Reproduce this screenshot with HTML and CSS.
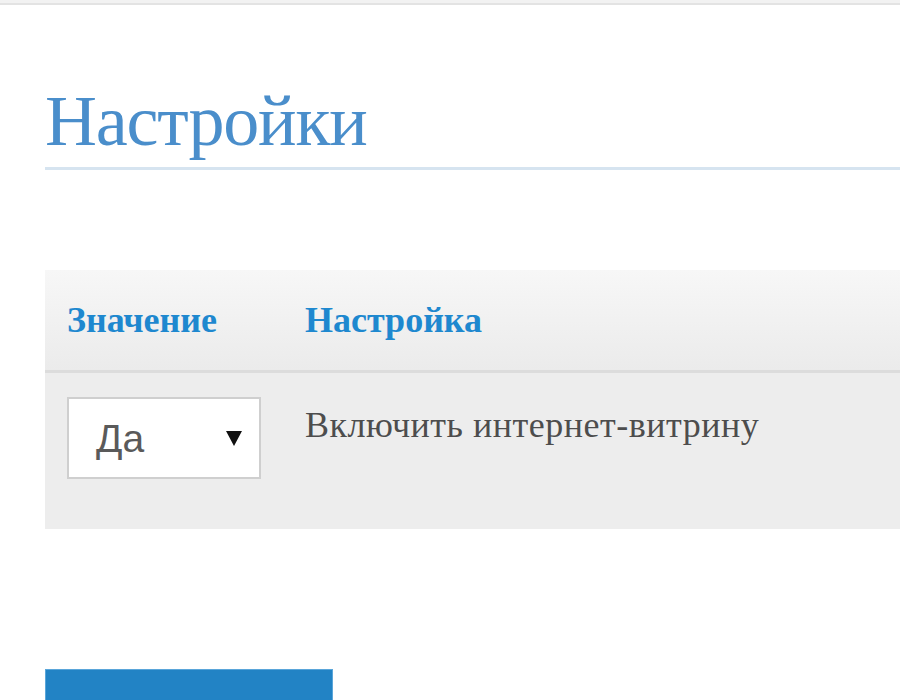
FILE: index.html
```html
<!DOCTYPE html>
<html lang="ru">
<head>
<meta charset="utf-8">
<title>Настройки</title>
<link rel="stylesheet" href="styles.css">
</head>
<body>
<div class="topbar"></div>
<main class="page">
  <h1 class="title">Настройки</h1>
  <div class="settings">
    <div class="row head">
      <div class="cell th">Значение</div>
      <div class="cell th">Настройка</div>
    </div>
    <div class="row body">
      <div class="cell">
        <div class="select">
          <span class="select-value">Да</span>
          <svg class="select-arrow" width="16" height="16" viewBox="0 0 16 16"><polygon points="0,1 16,1 8,16" fill="#111"/></svg>
        </div>
      </div>
      <div class="cell label">Включить интернет-витрину</div>
    </div>
  </div>
  <button class="save" type="button" aria-label="Сохранить"></button>
</main>
</body>
</html>
```
FILE: styles.css
```css
html, body {
  margin: 0;
  padding: 0;
  background: #ffffff;
  font-family: "Liberation Serif", "Times New Roman", serif;
  overflow: hidden;
}
.topbar {
  height: 3px;
  background: #f2f2f2;
  border-bottom: 2px solid #e3e3e3;
}
.page {
  padding-left: 45px;
}
.title {
  margin: 76px 0 0;
  font-size: 72px;
  line-height: 80px;
  font-weight: normal;
  letter-spacing: -1.2px;
  color: #4a8ecb;
  padding-bottom: 6px;
  border-bottom: 3px solid #d6e4f0;
}
.settings {
  margin-top: 100px;
}
.row {
  display: grid;
  grid-template-columns: 260px 1fr;
}
.row.head {
  background: linear-gradient(#f7f7f7, #ebebeb);
  border-bottom: 3px solid #dcdcdc;
}
.row.body {
  background: #ededed;
  height: 156px;
}
.cell {
  padding-left: 22px;
}
.row.head .cell {
  padding-left: 0;
}
.row.head .cell:first-child {
  padding-left: 22px;
}
.th {
  font-size: 36px;
  line-height: 40px;
  font-weight: bold;
  color: #1e88cf;
  padding-top: 30px;
  padding-bottom: 30px;
}
.row.body .cell:first-child {
  padding-top: 24px;
}
.row.body .label {
  padding-left: 0;
  padding-top: 32px;
  font-size: 36px;
  line-height: 40px;
  letter-spacing: 0.5px;
  color: #4d4d4d;
}
.select {
  box-sizing: border-box;
  width: 194px;
  height: 82px;
  border: 2px solid #cfcfcf;
  background: #ffffff;
  display: flex;
  align-items: center;
  justify-content: space-between;
  padding: 0 17px 0 27px;
}
.select-value {
  font-family: "Liberation Sans", Arial, sans-serif;
  font-size: 39px;
  line-height: 45px;
  color: #5a5a5a;
}
.select-arrow {
  display: block;
}
.save {
  display: block;
  margin-top: 140px;
  width: 288px;
  height: 60px;
  padding: 0;
  background: #2283c5;
  border: 1px solid #5aa6da;
}
```
